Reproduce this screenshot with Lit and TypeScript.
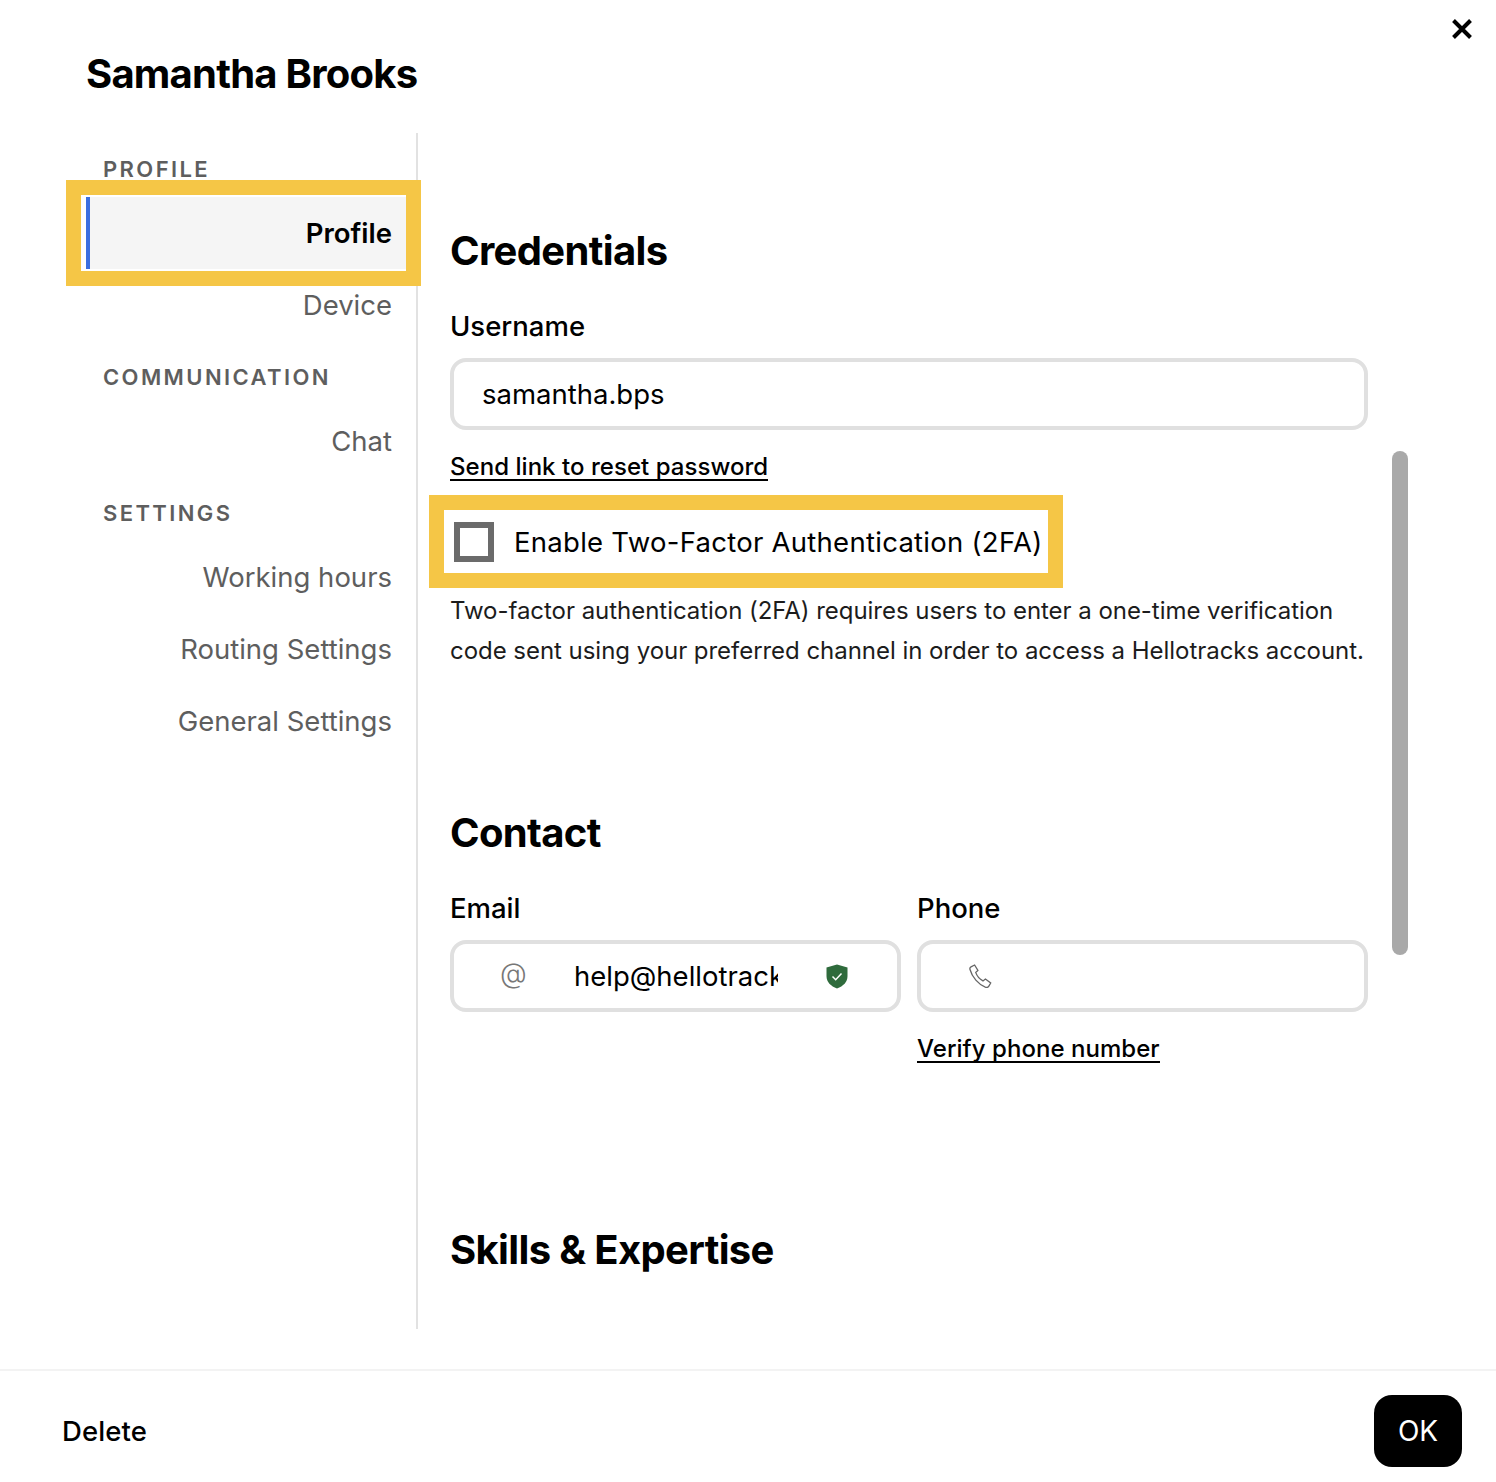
import { html, css, LitElement } from 'lit'
import { customElement } from 'lit/decorators.js'

@customElement('app-root')
export class AppRoot extends LitElement {
  static styles = css`
    :host {
      display: flex;
      flex-direction: column;
      position: relative;
      width: 1496px;
      height: 1482px;
      background: #fff;
      color: #000;
      overflow: hidden;
      font-family: Inter, "Liberation Sans", sans-serif;
      font-size: 27.5px;
    }

    .close {
      position: absolute;
      top: 19px;
      left: 1452px;
      width: 20px;
      height: 20px;
    }

    .title {
      margin: 50px 0 35px 86px;
      font-size: 40px;
      line-height: 48px;
      font-weight: 700;
      letter-spacing: -0.77px;
    }

    .body {
      display: flex;
      height: 1196px;
      margin-bottom: 40px;
    }

    /* sidebar */
    .side {
      width: 330px;
      margin-left: 86px;
      border-right: 2px solid #e2e2e2;
      flex: none;
    }

    .group {
      height: 64px;
      box-sizing: border-box;
      padding: 8px 0 0 17px;
      line-height: 57px;
      font-size: 22px;
      font-weight: 600;
      letter-spacing: 2.4px;
      color: #5e5e5e;
    }

    .item {
      position: relative;
      height: 72px;
      box-sizing: border-box;
      padding-right: 24px;
      text-align: right;
      line-height: 73px;
      color: #5e5e5e;
    }

    .item.active {
      background: #f5f5f5;
      border-left: 4px solid #3b6fe0;
      color: #000;
      font-weight: 600;
    }

    .mark {
      position: absolute;
      box-sizing: border-box;
      border: 15px solid #f5c646;
      pointer-events: none;
    }

    .item .mark {
      left: -24px;
      top: -17px;
      width: 355px;
      height: 106px;
    }

    /* main column */
    .main {
      flex: 1;
      position: relative;
      padding-left: 32px;
      overflow: hidden;
    }

    .scrollbar {
      position: absolute;
      left: 974px;
      top: 318px;
      width: 16px;
      height: 504px;
      border-radius: 8px;
      background: #a9a9a9;
    }

    .fields {
      width: 918px;
    }

    h2 {
      margin: 0;
      font-size: 40px;
      line-height: 48px;
      font-weight: 700;
      letter-spacing: -0.65px;
    }

    h2.first { margin-top: 94px; }
    h2.contact { margin-top: 138px; }
    h2.skills { margin-top: 163px; }

    .label {
      margin: 31px 0 12px;
      line-height: 41px;
      height: 40px;
      font-weight: 500;
    }

    .input {
      display: flex;
      align-items: center;
      height: 72px;
      box-sizing: border-box;
      border: 4px solid #e0e0e0;
      border-radius: 16px;
    }

    .input.plain { padding-left: 28px; }

    .link {
      display: block;
      width: fit-content;
      margin-top: 23px;
      height: 26px;
      line-height: 28px;
      font-size: 24px;
      font-weight: 500;
      letter-spacing: 0.04px;
      border-bottom: 2px solid #000;
      box-sizing: content-box;
    }

    .check-row {
      position: relative;
      display: flex;
      align-items: center;
      height: 64px;
      margin-top: 29px;
      letter-spacing: 0.27px;
    }

    .box {
      box-sizing: border-box;
      width: 40px;
      height: 40px;
      margin: 0 20px 0 4px;
      border: 6px solid #6b6b6b;
      flex: none;
    }

    .check-row .mark {
      left: -21px;
      top: -15px;
      width: 634px;
      height: 93px;
    }

    .help {
      margin-top: 17px;
      font-size: 24px;
      line-height: 40px;
      letter-spacing: -0.04px;
      color: #1c1c1c;
      white-space: nowrap;
    }

    .cols {
      display: grid;
      grid-template-columns: 451px 451px;
      column-gap: 16px;
    }

    .at {
      width: 120px;
      padding: 0 0 7px 46px;
      box-sizing: border-box;
      font-weight: 300;
      color: #777;
      flex: none;
    }

    .clip {
      width: 204px;
      overflow: hidden;
      white-space: nowrap;
      flex: none;
    }

    .input .shield { margin-left: 48px; flex: none; }
    .input .phone { margin-left: 48px; flex: none; }

    /* footer */
    .footer {
      display: flex;
      justify-content: space-between;
      align-items: center;
      border-top: 2px solid #f3f3f3;
      padding: 24px 34px 15px 62px;
    }

    .delete {
      font-weight: 500;
      letter-spacing: 0.1px;
    }

    .ok {
      width: 88px;
      height: 72px;
      border-radius: 18px;
      background: #000;
      color: #fff;
      display: flex;
      align-items: center;
      justify-content: center;
      font-size: 28px;
      font-weight: 400;
    }
  `

  renderNav () {
    return html`
      <div class="side">
        <div class="group">PROFILE</div>
        <div class="item active">Profile<div class="mark"></div></div>
        <div class="item">Device</div>
        <div class="group">COMMUNICATION</div>
        <div class="item">Chat</div>
        <div class="group">SETTINGS</div>
        <div class="item">Working hours</div>
        <div class="item">Routing Settings</div>
        <div class="item">General Settings</div>
      </div>
    `
  }

  render () {
    return html`
      <svg class="close" viewBox="0 0 20 20" fill="none" stroke="#000" stroke-width="4">
        <path d="M1.5 1.5 18.5 18.5M18.5 1.5 1.5 18.5"/>
      </svg>
      <div class="title">Samantha Brooks</div>
      <div class="body">
        ${this.renderNav()}
        <div class="main">
          <div class="fields">
            <h2 class="first">Credentials</h2>
            <div class="label">Username</div>
            <div class="input plain">samantha.bps</div>
            <span class="link">Send link to reset password</span>
            <div class="check-row">
              <div class="box"></div>
              <span>Enable Two-Factor Authentication (2FA)</span>
              <div class="mark"></div>
            </div>
            <div class="help">
              Two-factor authentication (2FA) requires users to enter a one-time verification<br>
              code sent using your preferred channel in order to access a Hellotracks account.
            </div>
            <h2 class="contact">Contact</h2>
            <div class="cols">
              <div>
                <div class="label">Email</div>
                <div class="input">
                  <span class="at">@</span>
                  <span class="clip">help@hellotracks.com</span>
                  <svg class="shield" width="22" height="25" viewBox="0 0 22 25">
                    <path d="M11 .5 21.5 3.5V12c0 6-4.2 10.200-10.500 12.500C4.700 22.200.5 18 .5 12V3.500Z" fill="#2f6b3c"/>
                    <path d="M6.500 12.500 9.700 15.700 15.500 9.500" fill="none" stroke="#fff" stroke-width="1.500"/>
                  </svg>
                </div>
              </div>
              <div>
                <div class="label">Phone</div>
                <div class="input">
                  <svg class="phone" width="24" height="24" viewBox="0 0 24 24" fill="none" stroke="#666" stroke-width="1.300">
                    <path d="M2 2.800 5.600 1l3.300 5.400-2.200 2c1 3 4 6.700 7.300 8.500l2.400-1.800 5.300 3.900-2 3.400c-.6 1-2 1.200-3.400.7C9.500 20.500 3 13 1 5.500.7 4.400 1 3.300 2 2.800Z"/>
                  </svg>
                </div>
                <span class="link">Verify phone number</span>
              </div>
            </div>
            <h2 class="skills">Skills &amp; Expertise</h2>
          </div>
          <div class="scrollbar"></div>
        </div>
      </div>
      <div class="footer">
        <span class="delete">Delete</span>
        <div class="ok">OK</div>
      </div>
    `
  }
}
